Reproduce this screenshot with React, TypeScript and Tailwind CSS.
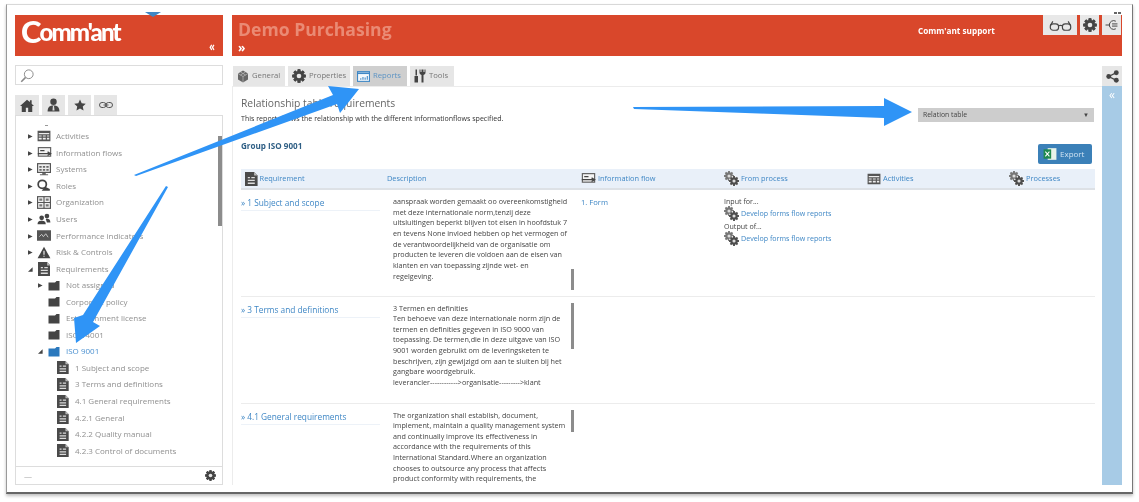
import React from 'react';

const BLUE = '#3f87c5';

// small drawn icons
const Cog: React.FC<{ size?: number; color?: string }> = ({ size = 14, color = '#444' }) => (
  <svg width={size} height={size} viewBox="0 0 24 24">
    <g fill={color}>
      {[0, 45, 90, 135, 180, 225, 270, 315].map((a) => (
        <rect key={a} x="9.5" y="0.5" width="5" height="23" rx="1" transform={`rotate(${a} 12 12)`} />
      ))}
      <circle cx="12" cy="12" r="8.5" />
    </g>
    <circle cx="12" cy="12" r="4" fill="#e6e6e6" />
  </svg>
);

const gearTeeth = [0, 45, 90, 135];

const Gears: React.FC<{ size?: number }> = ({ size = 15 }) => (
  <svg width={size} height={size} viewBox="0 0 24 24" className="shrink-0">
    <g fill="#777">
      {gearTeeth.map((a) => (
        <rect key={a} x="6.5" y="0" width="3" height="16" transform={`rotate(${a} 8 8)`} />
      ))}
      <circle cx="8" cy="8" r="6" />
    </g>
    <circle cx="8" cy="8" r="2.5" fill="#ddd" />
    <circle cx="16" cy="16" r="8" fill="#fff" />
    <g fill="#4d4d4d">
      {gearTeeth.map((a) => (
        <rect key={a} x="14.5" y="8" width="3" height="16" transform={`rotate(${a} 16 16)`} />
      ))}
      <circle cx="16" cy="16" r="6" />
    </g>
    <circle cx="16" cy="16" r="2.5" fill="#ddd" />
  </svg>
);

const DocIcon: React.FC<{ size?: number }> = ({ size = 15 }) => (
  <svg width={size * 0.9} height={size} viewBox="4 1 18 20" className="shrink-0">
    <path d="M4 1h13l5 5v15H4z" fill="#4a4a4a" />
    <path d="M17 1l5 5h-5z" fill="#bbb" />
    <path d="M8 8h3v2H8zM13 8h5v2h-5zM8 12h10v2H8zM8 16h10v2H8z" fill="#dcdcdc" />
  </svg>
);

const TableIcon: React.FC = () => (
  <svg width="14" height="12" viewBox="0 0 24 20" className="shrink-0">
    <rect x="1" y="1" width="22" height="18" fill="#555" />
    <path d="M3 5h18v2H3zM3 9h5v2H3zM10 9h5v2h-5zM17 9h4v2h-4zM3 13h5v3H3zM10 13h5v3h-5zM17 13h4v3h-4z" fill="#eee" />
  </svg>
);

const FlowIcon: React.FC = () => (
  <svg width="15" height="11" viewBox="0 0 24 18" className="shrink-0">
    <rect x="2" y="1" width="20" height="14" fill="#f4f4f4" stroke="#666" strokeWidth="2" />
    <path d="M1 11h22M17 8l5 3-5 3M5 6h7" fill="none" stroke="#444" strokeWidth="2" />
  </svg>
);

const ScreenIcon: React.FC = () => (
  <svg width="14" height="13" viewBox="0 0 24 22">
    <rect x="1" y="1" width="22" height="15" fill="#eee" stroke="#555" strokeWidth="2" />
    <path d="M4 5h4v3H4zM10 5h4v3h-4zM16 5h4v3h-4zM4 10h4v3H4zM10 10h4v3h-4zM16 10h4v3h-4zM9 17h6v2h4v2H5v-2h4z" fill="#666" />
  </svg>
);

const RolesIcon: React.FC = () => (
  <svg width="15" height="13" viewBox="0 0 24 20">
    <circle cx="9" cy="8" r="7" fill="none" stroke="#444" strokeWidth="3" />
    <path d="M14 12l8 4v3H8z" fill="#444" />
  </svg>
);

const OrgIcon: React.FC = () => (
  <svg width="14" height="13" viewBox="0 0 24 22">
    <rect x="1" y="1" width="22" height="20" fill="#f2f2f2" stroke="#555" strokeWidth="2" />
    <path d="M12 1v20M1 11h22" stroke="#555" strokeWidth="2" />
    <path d="M4 4h5v4H4zM15 4h5v4h-5zM4 14h5v4H4zM15 14h5v4h-5z" fill="#777" />
  </svg>
);

const UsersIcon: React.FC = () => (
  <svg width="14" height="12" viewBox="0 0 24 20">
    <circle cx="8" cy="8" r="4" fill="#444" />
    <circle cx="17" cy="5" r="4" fill="#444" />
    <path d="M1 19c0-5 3-6 7-6s7 1 7 6zM15 10c4-1 8 0 8 6h-6z" fill="#444" />
  </svg>
);

const KpiIcon: React.FC = () => (
  <svg width="14" height="11" viewBox="0 0 24 18">
    <rect width="24" height="18" fill="#555" />
    <path d="M4 11l4-4 3 4 4-5 4 6" fill="none" stroke="#ccc" strokeWidth="1.6" />
  </svg>
);

const RiskIcon: React.FC = () => (
  <svg width="14" height="13" viewBox="0 0 24 22">
    <path d="M12 1l11 20H1z" fill="#444" />
    <path d="M11 8h2v7h-2zM11 16.500h2v2h-2z" fill="#eee" />
  </svg>
);

const Folder: React.FC<{ color?: string }> = ({ color = '#444' }) => (
  <svg width="12" height="11" viewBox="0 0 24 22">
    <path d="M1 5h13l3-3h6v19H1z" fill={color} />
  </svg>
);

const Arrows: React.FC = () => (
  <svg className="absolute left-0 top-0 pointer-events-none" width="1139" height="502">
    <g fill="#2f94f6">
      <path d="M134 175L333 95 328 86 359 89 340 113 337 104 136 176z" />
      <path d="M168 187L93 322 100 326 76 343 74 318 83 315 166 186z" />
      <path d="M633 107L884 106 884 98 912 112 884 126 884 118 634 109z" />
    </g>
  </svg>
);

type TreeItem = { label: string; icon: React.ReactNode; level: 0 | 1 | 2; caret?: 'r' | 'd'; active?: boolean };

const tree: TreeItem[] = [
  { label: 'Activities', icon: <TableIcon />, level: 0, caret: 'r' },
  { label: 'Information flows', icon: <FlowIcon />, level: 0, caret: 'r' },
  { label: 'Systems', icon: <ScreenIcon />, level: 0, caret: 'r' },
  { label: 'Roles', icon: <RolesIcon />, level: 0, caret: 'r' },
  { label: 'Organization', icon: <OrgIcon />, level: 0, caret: 'r' },
  { label: 'Users', icon: <UsersIcon />, level: 0, caret: 'r' },
  { label: 'Performance indicators', icon: <KpiIcon />, level: 0, caret: 'r' },
  { label: 'Risk & Controls', icon: <RiskIcon />, level: 0, caret: 'r' },
  { label: 'Requirements', icon: <DocIcon size={14} />, level: 0, caret: 'd' },
  { label: 'Not assigned', icon: <Folder />, level: 1, caret: 'r' },
  { label: 'Corporate policy', icon: <Folder />, level: 1 },
  { label: 'Establishment license', icon: <Folder />, level: 1 },
  { label: 'ISO 14001', icon: <Folder />, level: 1 },
  { label: 'ISO 9001', icon: <Folder color="#2a78bd" />, level: 1, caret: 'd', active: true },
  { label: '1 Subject and scope', icon: <DocIcon size={13} />, level: 2 },
  { label: '3 Terms and definitions', icon: <DocIcon size={13} />, level: 2 },
  { label: '4.1 General requirements', icon: <DocIcon size={13} />, level: 2 },
  { label: '4.2.1 General', icon: <DocIcon size={13} />, level: 2 },
  { label: '4.2.2 Quality manual', icon: <DocIcon size={13} />, level: 2 },
  { label: '4.2.3 Control of documents', icon: <DocIcon size={13} />, level: 2 },
];

const TreeRow: React.FC<{ item: TreeItem }> = ({ item }) => (
  <div className={`flex items-center h-[16.55px] ${item.level === 0 ? 'pl-[12px]' : item.level === 1 ? 'pl-[22px]' : 'pl-[32px]'}`}>
    <span className="w-[9px] shrink-0 text-[6px] leading-none text-[#444]">
      {item.caret === 'r' ? '▶' : item.caret === 'd' ? '◢' : ''}
    </span>
    <span className={`shrink-0 flex justify-center ${item.level === 2 ? 'w-[18px] pr-[6px]' : 'w-[19px] pr-[5px]'}`}>{item.icon}</span>
    <span className={`text-[8px] whitespace-nowrap ${item.active ? 'text-[#4a90d0]' : 'text-[#909090]'}`}>{item.label}</span>
  </div>
);

const TabButton: React.FC<{ icon: React.ReactNode; label: string; active?: boolean; width: string }> = ({ icon, label, active, width }) => (
  <div className={`h-5 flex items-center gap-[3px] pl-[4px] ${width} ${active ? 'bg-[#cfcfcf] text-[#5b93c4]' : 'bg-[#e6e6e6] text-[#777]'}`}>
    {icon}
    <span className="text-[7.7px]">{label}</span>
  </div>
);

const Lines: React.FC<{ lines: string[] }> = ({ lines }) => (
  <div className="text-[7.2px] leading-[10.65px] text-[#444] whitespace-nowrap">
    {lines.map((l) => (
      <div key={l}>{l}</div>
    ))}
  </div>
);

const Link: React.FC<{ children: React.ReactNode }> = ({ children }) => (
  <span className="text-[#3f87c5]">{children}</span>
);

const gridCols = 'grid grid-cols-[146px_194px_143px_143px_142px_1fr]';

const HeadCell: React.FC<{ icon?: React.ReactNode; label: string; className?: string }> = ({ icon, label, className }) => (
  <div className={`flex items-center gap-[2px] text-[7.4px] text-[#3f87c5] ${className ?? ''}`}>
    {icon}
    <span>{label}</span>
  </div>
);

const rows = [
  {
    title: '» 1 Subject and scope',
    height: 'h-[106.5px] border-b',
    bar: 'mt-[73px] h-[21px]',
    lines: [
      'aanspraak worden gemaakt oo overeenkomstigheid',
      'met deze internationale norm,tenzij deze',
      'uitsluitingen beperkt blijven tot eisen in hoofdstuk 7',
      'en tevens None invloed hebben op het vermogen of',
      'de verantwoordelijkheid van de organisatie om',
      'producten te leveren die voldoen aan de eisen van',
      'klanten en van toepassing zijnde wet- en',
      'regelgeving.',
    ],
  },
  {
    title: '» 3 Terms and definitions',
    height: 'h-[107px] border-b',
    bar: 'mt-0 h-[46px]',
    lines: [
      '3 Termen en definities',
      'Ten behoeve van deze internationale norm zijn de',
      'termen en definities gegeven in ISO 9000 van',
      'toepassing. De termen,die in deze uitgave van ISO',
      '9001 worden gebruikt om de leveringsketen te',
      'beschrijven, zijn gewijzigd om aan te sluiten bij het',
      'gangbare woordgebruik.',
      'leverancier------------>organisatie--------->klant',
    ],
  },
  {
    title: '» 4.1 General requirements',
    height: 'h-[81px]',
    bar: 'mt-0 h-[22px]',
    lines: [
      'The organization shall establish, document,',
      'implement, maintain a quality management system',
      'and continually improve its effectiveness in',
      'accordance with the requirements of this',
      'International Standard.Where an organization',
      'chooses to outsource any process that affects',
      'product conformity with requirements, the',
    ],
  },
];

export default function App() {
  return (
    <div className="relative w-[1139px] h-[502px] overflow-hidden bg-white blur-[0.4px]" style={{ fontFamily: '"Open Sans", sans-serif' }}>
      <div className="pt-[4px] pl-[6px]">
        <div className="w-[1127px] h-[490px] bg-white border border-[#d8d8d8] border-l-[#9a9a9a] border-r-[#777] border-b-2 border-b-[#666] pl-[8px] pt-[10px] flex gap-[9px] shadow-[0_2px_3px_rgba(0,0,0,0.25)]">
          {/* left column */}
          <div className="w-[208px] shrink-0 flex flex-col h-[470px]">
            <div className="relative h-[41px] bg-[#d9472b] flex items-start pl-[6px] text-white font-black whitespace-nowrap" style={{ fontFamily: 'Lato, sans-serif' }}>
              <span className="text-[31px] leading-[32px] tracking-[-2px]">C</span>
              <span className="text-[24px] leading-[32px] mt-[1px] tracking-[-1.900px]">omm'ant</span>
              <span className="absolute right-[8px] bottom-[3px] text-[13px] leading-none">«</span>
            </div>
            <div className="mt-[9px] h-[20px] border border-[#ddd] flex items-center pl-[4px]">
              <svg width="15" height="15" viewBox="0 0 24 24" fill="none" stroke="#888" strokeWidth="1.5">
                <circle cx="14" cy="10" r="7" />
                <path d="M9 15l-7 7" strokeWidth="2.5" />
              </svg>
            </div>
            <div className="mt-[10px] h-[20px] flex gap-[3px]">
              <div className="w-[24px] bg-[#e6e6e6] flex items-center justify-center">
                <svg width="14" height="13" viewBox="0 0 24 22" fill="#444"><path d="M12 1L0 12h3v10h7v-7h4v7h7V12h3l-4-4V2h-3v3z" /></svg>
              </div>
              <div className="w-[23px] bg-[#e6e6e6] flex items-center justify-center">
                <svg width="13" height="14" viewBox="0 0 24 26" fill="#444"><circle cx="12" cy="7" r="6" /><path d="M1 25c0-8 4-11 11-11s11 3 11 11z" /><path d="M11 15h2l1 8h-4z" fill="#ddd" /></svg>
              </div>
              <div className="w-[23px] bg-[#e6e6e6] flex items-center justify-center">
                <svg width="12" height="12" viewBox="0 0 24 24" fill="#444"><path d="M12 1l3.400 7.400 8.100 1-6 5.500 1.600 8L12 18.900 4.900 22.900l1.600-8-6-5.500 8.100-1z" /></svg>
              </div>
              <div className="w-[23px] bg-[#e6e6e6] flex items-center justify-center">
                <svg width="14" height="8" viewBox="0 0 28 16" fill="none" stroke="#555" strokeWidth="2"><rect x="1" y="3" width="13" height="10" rx="5" /><rect x="14" y="3" width="13" height="10" rx="5" /><path d="M9 8h10" /></svg>
              </div>
            </div>
            <div className="relative flex-1 border border-[#ddd] flex flex-col">
              <div className="flex-1 pt-[10px] overflow-hidden">
                <div className="h-px w-[3px] ml-[29px] bg-[#999] mb-[2px] -mt-[1px]" />
                {tree.map((item) => (
                  <TreeRow key={item.label} item={item} />
                ))}
              </div>
              <div className="absolute right-0 top-[20px] w-[4px] h-[90px] bg-[#8c8c8c]" />
              <div className="h-[18px] shrink-0 border-t border-[#ddd] flex items-center justify-between pl-[8px] pr-[6px]">
                <span className="text-[8px] text-[#aaa] leading-none">—</span>
                <Cog size={11} />
              </div>
            </div>
          </div>

          {/* right column */}
          <div className="w-[890px] shrink-0 flex flex-col h-[470px]">
            <div className="relative h-[41px] bg-[#d9472b] pl-[6px] flex flex-col">
              <div className="text-[17.6px] leading-[27px] pt-[1px] font-bold text-[#ea8a74] whitespace-nowrap">Demo Purchasing</div>
              <span className="text-white text-[12px] leading-none font-bold -mt-[1px]">»</span>
              <span className="absolute left-[686px] top-[11px] text-white font-bold text-[8.2px] leading-[10px]">Comm'ant support</span>
              <div className="absolute right-[1px] top-0 flex gap-[3px] h-[20px]">
                <div className="w-[34px] bg-[#e8e8e8] flex items-center justify-center">
                  <svg width="23" height="11" viewBox="0 0 36 17" fill="none" stroke="#444" strokeWidth="1.8"><rect x="2" y="6" width="13" height="10" rx="4.500" /><rect x="21" y="6" width="13" height="10" rx="4.500" /><path d="M15 9c2-1 4-1 6 0M2 9L6 2M34 9L30 2" /></svg>
                </div>
                <div className="w-[19px] bg-[#e8e8e8] flex items-center justify-center"><Cog size={14} /></div>
                <div className="w-[19px] bg-[#e8e8e8] flex items-center justify-center">
                  <svg width="13" height="12" viewBox="0 0 24 22" fill="none" stroke="#444" strokeWidth="1.8"><path d="M20 4a8 8 0 0 0-12 7 8 8 0 0 0 12 7" /><path d="M1 11h7M13 9h10M13 13h10" /></svg>
                </div>
              </div>
              <div className="absolute right-[1px] -top-[3px] flex gap-[1px]">
                <div className="w-[3px] h-[2px] bg-[#666]" />
                <div className="w-[3px] h-[2px] bg-[#666]" />
              </div>
            </div>

            <div className="mt-[10px] flex-1 flex min-h-0">
              <div className="flex-1 flex flex-col min-w-0">
                <div className="h-5 flex gap-[3px] pl-[1px] shrink-0">
                  <TabButton width="w-[52px]" label="General" icon={
                    <svg width="12" height="13" viewBox="0 0 24 26"><path d="M12 1l10 6v12l-10 6-10-6V7z" fill="#666" /><path d="M2 7l10 6 10-6M12 13v12M7 4l10 6M17 4L7 10" stroke="#ddd" strokeWidth="1" fill="none" /></svg>
                  } />
                  <TabButton width="w-[62px]" label="Properties" icon={<Cog size={14} />} />
                  <TabButton width="w-[54px]" active label="Reports" icon={
                    <svg width="13" height="11" viewBox="0 0 24 20"><rect x="1" y="1" width="22" height="18" fill="#f5f8fb" stroke="#3f87c5" strokeWidth="2" /><path d="M1 4h22" stroke="#3f87c5" strokeWidth="3" /><path d="M6 16v-3h2v3zM10 16v-5h2v5zM14 16v-4h2v4zM18 16V9h2v7z" fill="#3f87c5" /></svg>
                  } />
                  <TabButton width="w-[44px]" label="Tools" icon={
                    <svg width="12" height="14" viewBox="0 0 24 28" fill="#444"><path d="M3 1h3v12H3zM1 14h7v13H1z" /><path d="M11 1v6c0 3 2 4 4 5v15h4V12c2-1 4-2 4-5V1h-2v5h-2V1h-4v5h-2V1z" /></svg>
                  } />
                </div>
                <div className="relative flex-1 min-h-0 overflow-hidden border-l border-t border-[#ececec] pl-[8px] pr-[6px]">
                  <div className="h-[76px] relative">
                    <div className="pt-[9px] text-[10.3px] leading-[15px] text-[#666]">Relationship table requirements</div>
                    <div className="mt-[2px] text-[7.07px] leading-[11px] text-[#333]">This report shows the relationship with the different informationflows specified.</div>
                    <div className="mt-[16px] text-[8.1px] leading-[12px] font-bold text-[#2f5f85]">Group ISO 9001</div>
                    <div className="absolute left-[677px] top-[21px] w-[176px] h-[14px] bg-[#cdcdcd] flex items-center justify-between px-[5px] text-[6.9px] text-[#444]">
                      <span>Relation table</span>
                      <span className="text-[6px] leading-none">▼</span>
                    </div>
                    <div className="absolute left-[797px] top-[57px] w-[54px] h-[20px] bg-[#3b80b8] rounded-[2px] flex items-center pl-[5px] gap-[3px] text-[#cfe2f2] text-[8px]">
                      <svg width="14" height="14" viewBox="0 0 24 24"><rect x="8" y="2" width="15" height="20" fill="#e8f3ea" /><rect x="1" y="4" width="13" height="16" fill="#1f8a4c" /><path d="M4 8l7 8M11 8l-7 8" stroke="#fff" strokeWidth="1.800" /></svg>
                      <span>Export</span>
                    </div>
                  </div>
                  <div className={`${gridCols} mt-[6px] h-[21px] bg-[#e9f0f9] border-b-2 border-[#dde1e6] items-center w-[854px]`}>
                    <HeadCell className="pl-[4px]" icon={<DocIcon size={14} />} label="Requirement" />
                    <HeadCell label="Description" />
                    <HeadCell icon={<FlowIcon />} label="Information flow" />
                    <HeadCell icon={<Gears />} label="From process" />
                    <HeadCell icon={<TableIcon />} label="Activities" />
                    <HeadCell icon={<Gears />} label="Processes" />
                  </div>
                  {rows.map((row, i) => (
                    <div key={row.title} className={`${gridCols} ${row.height} border-[#ececec] w-[854px]`}>
                      <div className="pt-[7px]">
                        <div className="text-[8.3px] leading-[12px] pb-[1px] border-b border-[#edf2f8] text-[#3f87c5] font-medium whitespace-nowrap w-[139px]">{row.title}</div>
                      </div>
                      <div className="pl-[6px] pt-[6px] flex">
                        <div className="flex-1 min-w-0"><Lines lines={row.lines} /></div>
                        <div className={`w-[3px] ${row.bar} bg-[#8c8c8c] mr-[7px] shrink-0`} />
                      </div>
                      <div className="pt-[7px] text-[7.6px] leading-[11px]">{i === 0 && <Link>1. Form</Link>}</div>
                      <div className="pt-[5px] text-[7.1px] leading-[12.4px] text-[#444]">
                        {i === 0 && (
                          <>
                            <div>Input for...</div>
                            <div className="flex items-center gap-[2px] h-[12.4px]"><Gears /><Link>Develop forms flow reports</Link></div>
                            <div>Output of...</div>
                            <div className="flex items-center gap-[2px] h-[12.4px]"><Gears /><Link>Develop forms flow reports</Link></div>
                          </>
                        )}
                      </div>
                      <div />
                      <div />
                    </div>
                  ))}
                </div>
              </div>
              <div className="w-[20px] shrink-0 flex flex-col">
                <div className="h-5 bg-[#e6e6e6] flex items-center justify-center">
                  <svg width="13" height="13" viewBox="0 0 24 24" fill="#444"><circle cx="19" cy="5" r="4.500" /><circle cx="5" cy="12" r="4.500" /><circle cx="19" cy="19" r="4.500" /><path d="M5 12L19 5M5 12l14 7" stroke="#444" strokeWidth="2.500" /></svg>
                </div>
                <div className="flex-1 bg-[#a7cbe6] text-white text-[12px] leading-none text-center pt-[3px]">«</div>
              </div>
            </div>
          </div>
        </div>
      </div>
      {/* little marker over the header */}
      <div className="absolute left-[145px] top-[12px] w-0 h-0 border-l-[8px] border-r-[8px] border-t-[5px] border-l-transparent border-r-transparent" style={{ borderTopColor: BLUE }} />
      <Arrows />
    </div>
  );
}
